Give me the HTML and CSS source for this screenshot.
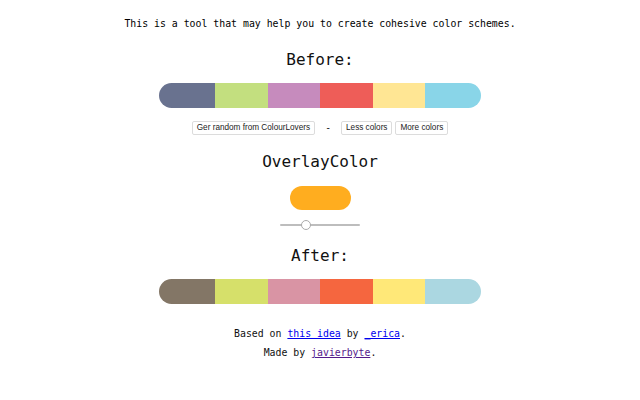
FILE: index.html
```html
<!DOCTYPE html>
<html>
<head>
<meta charset="utf-8">
<link rel="stylesheet" href="styles.css">
</head>
<body>
<main class="page">
  <p class="intro">This is a tool that may help you to create cohesive color schemes.</p>
  <h2 class="title t-before">Before:</h2>
  <div class="bar">
    <div class="sw" style="background:#69728f"></div>
    <div class="sw" style="background:#c3df7f"></div>
    <div class="sw" style="background:#c68bbd"></div>
    <div class="sw" style="background:#ee5d58"></div>
    <div class="sw" style="background:#ffe694"></div>
    <div class="sw" style="background:#89d5e8"></div>
  </div>
  <div class="controls">
    <button class="btn">Ger random from ColourLovers</button>
    <span class="dash">-</span>
    <button class="btn btn-less">Less colors</button>
    <button class="btn">More colors</button>
  </div>
  <h2 class="title t-overlay">OverlayColor</h2>
  <div class="pill"></div>
  <input class="range" type="range" min="0" max="100" value="30">
  <h2 class="title t-after">After:</h2>
  <div class="bar bar-after">
    <div class="sw" style="background:#837666"></div>
    <div class="sw" style="background:#d6e06a"></div>
    <div class="sw" style="background:#d994a4"></div>
    <div class="sw" style="background:#f5663f"></div>
    <div class="sw" style="background:#ffe878"></div>
    <div class="sw" style="background:#abd7e1"></div>
  </div>
  <div class="footer">
    <p>Based on <a href="#" class="link">this idea</a> by <a href="#" class="link">_erica</a>.</p>
    <p>Made by <a href="#" class="link visited">javierbyte</a>.</p>
  </div>
</main>
</body>
</html>
```
FILE: styles.css
```css
html, body {
  margin: 0;
  padding: 0;
  background: #fff;
}
.page {
  display: flex;
  flex-direction: column;
  align-items: center;
  font-family: "DejaVu Sans Mono", monospace;
  color: #111;
}
.intro {
  margin: 18px 0 0;
  font-size: 9.85px;
  line-height: 12px;
  color: #000;
}
.title {
  margin: 0;
  font-size: 16px;
  line-height: 20px;
  font-weight: normal;
  color: #111;
}
.t-before { margin-top: 20px; }
.t-overlay { margin-top: 17px; }
.t-after { margin-top: 16px; }
.bar {
  margin-top: 13px;
  width: 322px;
  height: 25px;
  display: flex;
  border-radius: 13px;
  overflow: hidden;
}
.sw {
  flex: 1 1 0;
}
.sw:first-child, .sw:last-child {
  flex: 0 0 56px;
}
.controls {
  margin-top: 13px;
  height: 14px;
  display: flex;
  align-items: center;
}
.btn {
  flex: none;
  font-family: "Liberation Sans", Arial, sans-serif;
  font-size: 8.2px;
  line-height: 12px;
  height: 14px;
  padding: 0 4px;
  margin: 0;
  background: #fff;
  color: #222;
  border: 1px solid #dcdcdc;
  border-radius: 2px;
}
.btn-less {
  margin-right: 3px;
}
.dash {
  flex: none;
  width: 26px;
  text-align: center;
  font-family: "Liberation Sans", Arial, sans-serif;
  font-size: 10px;
  line-height: 14px;
  color: #222;
}
.pill {
  margin-top: 14px;
  width: 61px;
  height: 24px;
  border-radius: 12px;
  background: #ffad1f;
}
.range {
  -webkit-appearance: none;
  appearance: none;
  margin: 10px 0 0;
  width: 80px;
  height: 10px;
  background: transparent;
  padding: 0;
}
.range::-webkit-slider-runnable-track {
  height: 2px;
  background: #bdbdbd;
  border-radius: 1px;
}
.range::-webkit-slider-thumb {
  -webkit-appearance: none;
  appearance: none;
  width: 10px;
  height: 10px;
  margin-top: -4px;
  border-radius: 50%;
  background: #fff;
  border: 1px solid #aaa;
  box-sizing: border-box;
}
.footer {
  margin-top: 20px;
  text-align: center;
  font-size: 9.85px;
  line-height: 19px;
}
.footer p {
  margin: 0;
}
.link {
  color: #0000ee;
  text-decoration: underline;
}
.link.visited {
  color: #551a8b;
}
```
